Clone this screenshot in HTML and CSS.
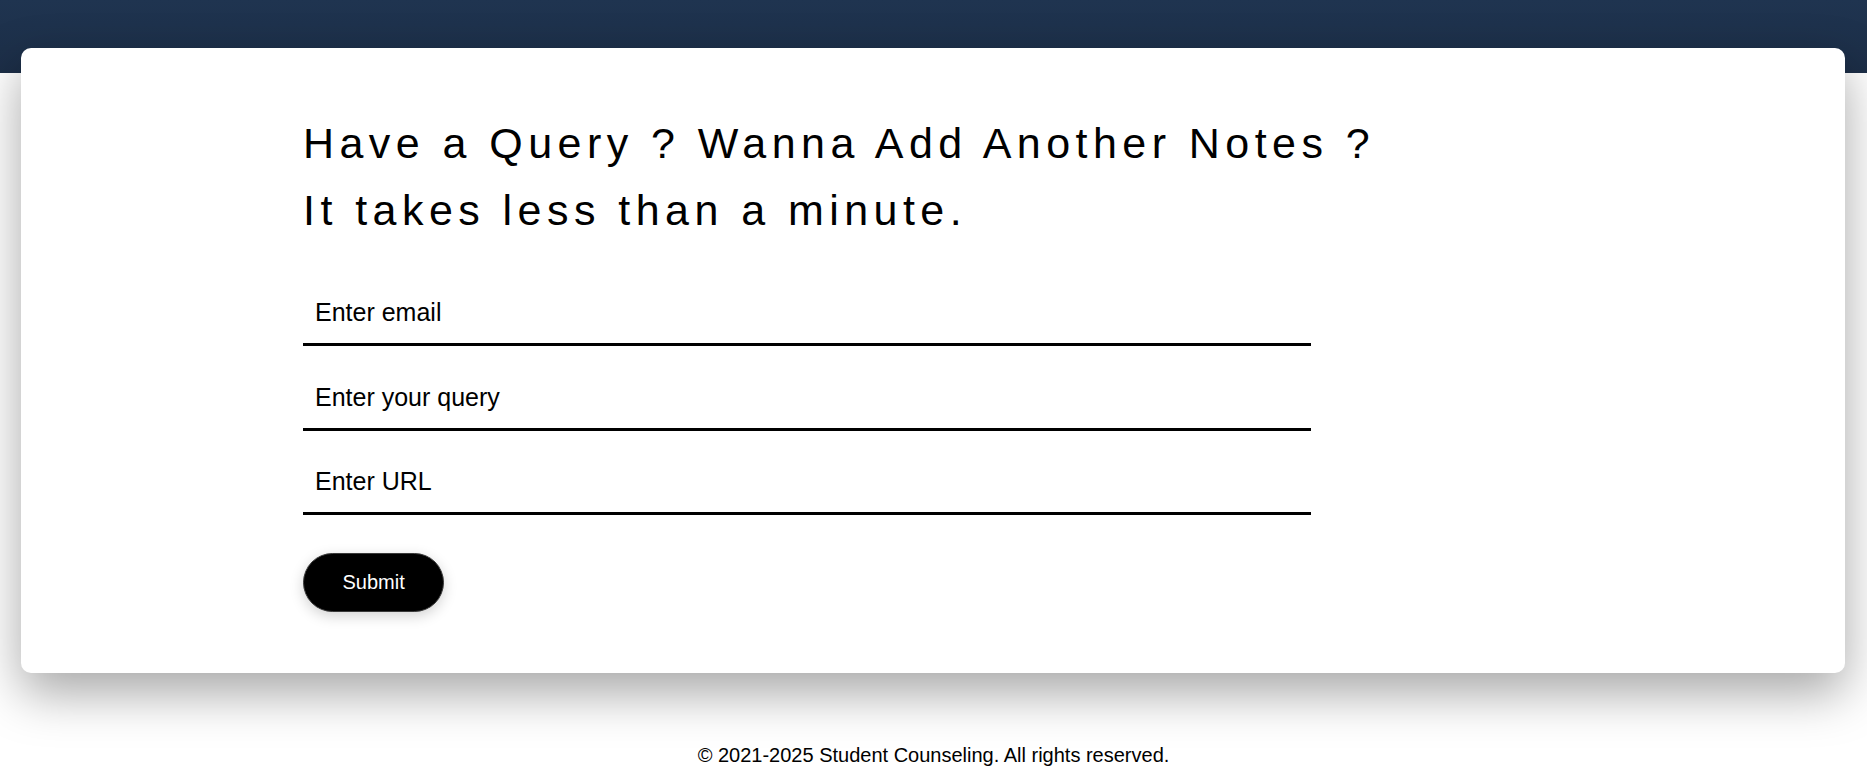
FILE: index.html
```html
<!DOCTYPE html>
<html lang="en">
<head>
<meta charset="utf-8">
<title>Student Counseling - Query</title>
<link rel="stylesheet" href="styles.css">
</head>
<body>
<div class="top-band"></div>
<main class="card">
  <form class="query-form">
    <h1 class="query-title">Have a Query ? Wanna Add Another Notes ?<br>It takes less than a minute.</h1>
    <input class="field" type="email" placeholder="Enter email">
    <input class="field" type="text" placeholder="Enter your query">
    <input class="field" type="url" placeholder="Enter URL">
    <button class="submit-btn" type="button">Submit</button>
  </form>
</main>
<footer class="site-footer">© 2021-2025 Student Counseling. All rights reserved.</footer>
</body>
</html>
```

FILE: styles.css
```css
html, body {
  margin: 0;
  padding: 0;
  background: #ffffff;
  font-family: "Liberation Sans", Arial, sans-serif;
  color: #000;
}

.top-band {
  height: 73px;
  background: linear-gradient(180deg, #1f3450 0%, #1c2e47 100%);
}

.card {
  position: relative;
  margin: -25px 22px 0 21px;
  background: #ffffff;
  border-radius: 10px;
  box-shadow: 0 20px 50px rgba(0, 0, 0, 0.35);
  padding: 62px 0 61px;
}

.query-form {
  width: 1260px;
  margin: 0 auto;
  display: flex;
  flex-direction: column;
  align-items: flex-start;
}

.query-title {
  margin: 0 0 40px;
  font-size: 43px;
  font-weight: 400;
  line-height: 66.7px;
  letter-spacing: 5.45px;
}

.field {
  box-sizing: border-box;
  width: 80%;
  margin: 0 0 21.5px;
  padding: 15px 12px 16px;
  font-family: "Liberation Sans", Arial, sans-serif;
  font-size: 25px;
  line-height: normal;
  color: #000;
  background: transparent;
  border: none;
  border-bottom: 3px solid #000;
  outline: none;
}

.field::placeholder {
  color: #000;
  opacity: 1;
}

.submit-btn {
  margin-top: 16.5px;
  padding: 17px 38.5px;
  font-family: "Liberation Sans", Arial, sans-serif;
  font-size: 20px;
  line-height: normal;
  color: #fff;
  background: #000;
  border: 1px solid #3a3a3a;
  border-radius: 40px;
  box-shadow: 0 4px 14px rgba(0, 0, 0, 0.18);
  cursor: pointer;
}

.site-footer {
  margin-top: 71px;
  text-align: center;
  font-size: 20px;
  line-height: normal;
  color: #000;
}
```
